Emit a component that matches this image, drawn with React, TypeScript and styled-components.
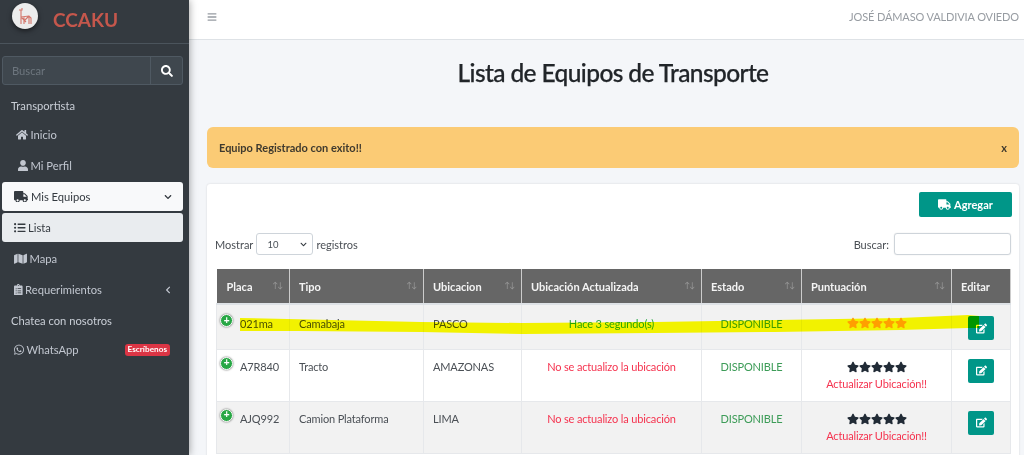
import React from 'react'
import styled, { createGlobalStyle } from 'styled-components'
import {
  FaBars,
  FaChevronDown,
  FaChevronLeft,
  FaClipboardList,
  FaEdit,
  FaHome,
  FaListUl,
  FaMap,
  FaSearch,
  FaStar,
  FaTruck,
  FaUser,
  FaWhatsapp,
} from 'react-icons/fa'

const GlobalStyle = createGlobalStyle`
  html, body {
    margin: 0;
    padding: 0;
    height: 455px;
    overflow: hidden;
    background: #f4f6f9;
    font-family: Lato, "Liberation Sans", sans-serif;
  }
  * {
    box-sizing: border-box;
  }
`

const Page = styled.div`
  display: flex;
  width: 1024px;
  height: 455px;
  overflow: hidden;
`

const Sidebar = styled.aside`
  flex: 0 0 189px;
  height: 455px;
  background: #343a40;
  box-shadow: 0 0 8px rgba(0, 0, 0, 0.4);
  z-index: 2;
  color: #c2c7d0;
  font-size: 11.2px;
`

const Brand = styled.div`
  display: flex;
  align-items: center;
  gap: 15px;
  height: 44px;
  padding: 0 0 12px 12px;
  border-bottom: 1px solid #4b545c;
`

const Logo = styled.div`
  display: flex;
  align-items: center;
  justify-content: center;
  width: 26px;
  height: 26px;
  border-radius: 50%;
  background: #ececec;
  box-shadow: 0 2px 5px rgba(0, 0, 0, 0.5);
`

const BrandName = styled.span`
  font-size: 19px;
  font-weight: 700;
  color: #c5574c;
  margin-top: 7px;
`

const SearchBar = styled.div`
  display: flex;
  height: 29px;
  margin: 12px 6px 0 2px;
  border: 1px solid #4f5962;
  border-radius: 3px;
  background: #3f474e;
`

const SearchText = styled.div`
  flex: 1;
  padding-left: 9px;
  line-height: 27px;
  color: #6d767e;
  border-right: 1px solid #4f5962;
`

const SearchButton = styled.div`
  display: flex;
  flex: 0 0 31px;
  align-items: center;
  justify-content: center;
  color: #fff;
  font-size: 12px;
`

const Nav = styled.nav`
  display: flex;
  flex-direction: column;
  gap: 2px;
  padding: 6px 6px 0 2px;
`

const Heading = styled.div`
  height: 27px;
  padding-left: 9px;
  line-height: 29px;
  color: #c9ced6;
`

type ItemProps = {
  $tone?: 'open' | 'current'
  $indent?: number
  $icon: number
}

const Item = styled.div<ItemProps>`
  display: flex;
  align-items: center;
  gap: 2.5px;
  height: 29px;
  padding: 0 11px 0 ${(props: ItemProps) => props.$indent ?? 12}px;
  border-radius: 3px;
  color: ${(props: ItemProps) => (props.$tone ? '#343a40' : '#c2c7d0')};
  background: ${(props: ItemProps) =>
    props.$tone === 'open' ? '#f8f9fa' : props.$tone === 'current' ? '#e9ecef' : 'transparent'};
  & > svg {
    flex: none;
    width: ${(props: ItemProps) => props.$icon}px;
    height: 11.5px;
  }
`

const ItemEnd = styled.span`
  display: flex;
  margin-left: auto;
  font-size: 8px;
`

const Badge = styled.span`
  margin-left: auto;
  margin-right: 2px;
  padding: 1.5px 3px;
  border-radius: 3px;
  background: #dc3545;
  color: #fff;
  font-size: 8.2px;
  font-weight: 700;
  line-height: 9px;
`

const Main = styled.main`
  flex: 1;
  min-width: 0;
`

const TopBar = styled.header`
  display: flex;
  align-items: center;
  justify-content: space-between;
  height: 40px;
  padding: 0 5px 6px 18px;
  background: #fff;
  border-bottom: 1px solid #dee2e6;
  color: #979ca2;
  font-size: 10px;
`

const UserName = styled.span`
  font-size: 11px;
  letter-spacing: -0.13px;
`

const Content = styled.div`
  padding: 0 5px 0 18px;
`

const Title = styled.h1`
  margin: 18px 0 39px;
  font-size: 24.5px;
  line-height: 30px;
  font-weight: 500;
  letter-spacing: -0.6px;
  -webkit-text-stroke: 0.25px #212529;
  color: #212529;
  text-align: center;
`

const Alert = styled.div`
  display: flex;
  align-items: center;
  justify-content: space-between;
  height: 41px;
  padding: 0 12px;
  margin-bottom: 16px;
  border-radius: 6px;
  background: #fbcb75;
  color: #3f3a2e;
  font-size: 11px;
  font-weight: 700;
`

const Card = styled.section`
  position: relative;
  height: 300px;
  padding: 8px 8px 0 8px;
  background: #fff;
  border-radius: 3px 3px 0 0;
  box-shadow: 0 0 2px rgba(0, 0, 0, 0.15);
`

const CardTools = styled.div`
  display: flex;
  justify-content: flex-end;
  height: 25px;
`

const AddButton = styled.button`
  display: flex;
  align-items: center;
  justify-content: center;
  gap: 3px;
  width: 93px;
  height: 25px;
  margin-right: -1px;
  padding: 0;
  border: 0;
  border-radius: 2px;
  background: #009688;
  color: #fff;
  font: 700 11px Lato, sans-serif;
  & > svg {
    font-size: 13px;
  }
`

const Filters = styled.div`
  display: flex;
  align-items: center;
  justify-content: space-between;
  height: 24px;
  margin-top: 15px;
  color: #4a4f55;
  font-size: 11px;
`

const Group = styled.label`
  display: flex;
  align-items: center;
  gap: 3px;
`

const PageSize = styled.div`
  display: flex;
  align-items: center;
  justify-content: space-between;
  width: 57px;
  height: 22px;
  padding: 0 5px 0 10px;
  border: 1px solid #ced4da;
  border-radius: 3px;
  font-size: 9.5px;
  color: #495057;
  & > svg {
    font-size: 7px;
    color: #343a40;
  }
`

const SearchBox = styled.div`
  width: 117px;
  height: 22px;
  margin-left: 2px;
  border: 1px solid #ced4da;
  border-radius: 3px;
  box-shadow: 0 0 1px rgba(0, 0, 0, 0.2);
`

const Table = styled.table`
  width: 794px;
  margin: 13px 0 0 1px;
  border-collapse: collapse;
  table-layout: fixed;
  font-size: 11px;
  letter-spacing: -0.15px;
  color: #4b5056;
`

const HeadCell = styled.th`
  position: relative;
  height: 35px;
  padding: 0 0 0 9px;
  background: #666;
  border-right: 1px solid #ccc;
  border-bottom: 2px solid #dee2e6;
  color: #f4f4f4;
  font-size: 11px;
  font-weight: 700;
  letter-spacing: 0;
  text-align: left;
  &:first-child {
    padding-left: 10px;
  }
`

const SortMark = styled.span`
  position: absolute;
  top: 11px;
  right: 7px;
  font-size: 8px;
  font-weight: 400;
  letter-spacing: -1px;
  color: #9a9a9a;
`

type RowProps = {
  $striped: boolean
  $short: boolean
}

const Row = styled.tr<RowProps>`
  background: ${(props: RowProps) => (props.$striped ? '#f2f2f2' : '#fff')};
  & > td {
    height: ${(props: RowProps) => (props.$short ? 45 : 52)}px;
    padding-top: ${(props: RowProps) => (props.$short ? 11 : 9)}px;
  }
`

type CellProps = {
  $center?: boolean
  $color?: string
}

const Cell = styled.td<CellProps>`
  position: relative;
  padding-left: ${(props: CellProps) => (props.$center ? 0 : 9)}px;
  padding-right: 0;
  padding-bottom: 0;
  vertical-align: top;
  border: 1px solid #e6e8eb;
  text-align: ${(props: CellProps) => (props.$center ? 'center' : 'left')};
  color: ${(props: CellProps) => props.$color ?? 'inherit'};
  line-height: 16px;
`

const PlateCell = styled(Cell)`
  padding-left: 23px;
`

const ExpandMark = styled.span<{ $top: number }>`
  position: absolute;
  top: ${(props) => props.$top}px;
  left: 3px;
  display: flex;
  align-items: center;
  justify-content: center;
  width: 13px;
  height: 13px;
  border: 1.5px solid #fff;
  border-radius: 50%;
  background: #28a745;
  box-shadow: 0 0 2px #555;
  color: #fff;
  font: 700 10px/10px "Liberation Sans", sans-serif;
`

const Stars = styled.div<{ $color: string; $lift: number }>`
  display: flex;
  justify-content: center;
  margin-top: ${(props) => props.$lift}px;
  font-size: 12px;
  color: ${(props) => props.$color};
`

const Warning = styled.div`
  margin-top: 3px;
  color: #f5334f;
`

const EditButton = styled.button`
  display: inline-flex;
  align-items: center;
  justify-content: center;
  width: 26px;
  height: 24px;
  margin: 0;
  padding: 0;
  border: 0;
  border-radius: 2px;
  background: #009688;
  color: #fff;
  font-size: 11px;
`

const Highlight = styled.svg`
  position: absolute;
  top: 128px;
  left: 31px;
  width: 745px;
  height: 24px;
  mix-blend-mode: multiply;
  pointer-events: none;
`

const columns = [
  { label: 'Placa', width: 73 },
  { label: 'Tipo', width: 134 },
  { label: 'Ubicacion', width: 98 },
  { label: 'Ubicación Actualizada', width: 180 },
  { label: 'Estado', width: 100 },
  { label: 'Puntuación', width: 150 },
  { label: 'Editar', width: 59 },
]

const rows = [
  { plate: '021ma', type: 'Camabaja', place: 'PASCO', fresh: true },
  { plate: 'A7R840', type: 'Tracto', place: 'AMAZONAS', fresh: false },
  { plate: 'AJQ992', type: 'Camion Plataforma', place: 'LIMA', fresh: false },
]

const App = () => (
  <Page>
    <GlobalStyle />
    <Sidebar>
      <Brand>
        <Logo>
          <svg width="16" height="18" viewBox="0 0 16 18" fill="none" stroke="#d4766b" strokeWidth="1.1">
            <path d="M2 3h3V1M4 3v7l8-1 2 2v6M4 10v7M7 10v7M12 9v8M4 10l5 5M12 9l-5 5" />
          </svg>
        </Logo>
        <BrandName>CCAKU</BrandName>
      </Brand>
      <SearchBar>
        <SearchText>Buscar</SearchText>
        <SearchButton>
          <FaSearch />
        </SearchButton>
      </SearchBar>
      <Nav>
        <Heading>Transportista</Heading>
        <Item $indent={14} $icon={12}>
          <FaHome />
          Inicio
        </Item>
        <Item $indent={16} $icon={10}>
          <FaUser />
          Mi Perfil
        </Item>
        <Item $tone="open" $icon={14.4}>
          <FaTruck />
          Mis Equipos
          <ItemEnd>
            <FaChevronDown />
          </ItemEnd>
        </Item>
        <Item $tone="current" $icon={11.5}>
          <FaListUl />
          Lista
        </Item>
        <Item $icon={13}>
          <FaMap />
          Mapa
        </Item>
        <Item $icon={8.6}>
          <FaClipboardList />
          Requerimientos
          <ItemEnd>
            <FaChevronLeft />
          </ItemEnd>
        </Item>
        <Heading>Chatea con nosotros</Heading>
        <Item $icon={10}>
          <FaWhatsapp />
          WhatsApp
          <Badge>Escríbenos</Badge>
        </Item>
      </Nav>
    </Sidebar>
    <Main>
      <TopBar>
        <FaBars />
        <UserName>JOSÉ DÁMASO VALDIVIA OVIEDO</UserName>
      </TopBar>
      <Content>
        <Title>Lista de Equipos de Transporte</Title>
        <Alert>
          <span>Equipo Registrado con exito!!</span>
          <span>x</span>
        </Alert>
        <Card>
          <CardTools>
            <AddButton>
              <FaTruck />
              Agregar
            </AddButton>
          </CardTools>
          <Filters>
            <Group>
              Mostrar
              <PageSize>
                10
                <FaChevronDown />
              </PageSize>
              registros
            </Group>
            <Group>
              Buscar:
              <SearchBox />
            </Group>
          </Filters>
          <Table>
            <colgroup>
              {columns.map((column) => (
                <col key={column.label} width={column.width} />
              ))}
            </colgroup>
            <thead>
              <tr>
                {columns.map((column) => (
                  <HeadCell key={column.label}>
                    {column.label}
                    {column.label !== 'Editar' && <SortMark>↑↓</SortMark>}
                  </HeadCell>
                ))}
              </tr>
            </thead>
            <tbody>
              {rows.map((row, index) => (
                <Row key={row.plate} $striped={index % 2 === 0} $short={index === 0}>
                  <PlateCell>
                    <ExpandMark $top={index === 0 ? 9 : 7}>+</ExpandMark>
                    {row.plate}
                  </PlateCell>
                  <Cell>{row.type}</Cell>
                  <Cell>{row.place}</Cell>
                  <Cell $center $color={row.fresh ? '#28a745' : '#f5334f'}>
                    {row.fresh ? 'Hace 3 segundo(s)' : 'No se actualizo la ubicación'}
                  </Cell>
                  <Cell $center $color="#3d9c58">
                    DISPONIBLE
                  </Cell>
                  <Cell $center>
                    <Stars $color={row.fresh ? '#ff9f1a' : '#212b36'} $lift={row.fresh ? 1 : 2}>
                      {[0, 1, 2, 3, 4].map((star) => (
                        <FaStar key={star} />
                      ))}
                    </Stars>
                    {!row.fresh && <Warning>Actualizar Ubicación!!</Warning>}
                  </Cell>
                  <Cell $center>
                    <EditButton>
                      <FaEdit />
                    </EditButton>
                  </Cell>
                </Row>
              ))}
            </tbody>
          </Table>
          <Highlight viewBox="0 0 745 24" preserveAspectRatio="none">
            <path
              d="M2 6 L183 10 L284 11 L417 10 L537 8 L662 6 L730 3 L741 4 L741 16 L730 16 L662 18 L537 20 L417 21 L284 22 L183 20 L60 19 L2 19 Z"
              fill="#ffff00"
            />
          </Highlight>
        </Card>
      </Content>
    </Main>
  </Page>
)

export default App
